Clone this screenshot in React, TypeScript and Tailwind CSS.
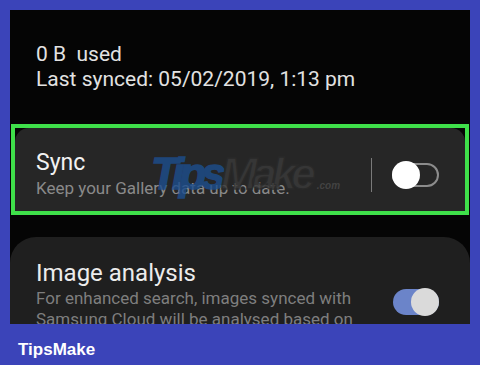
export default function App() {
  return (
    <div
      className="flex h-[365px] w-[480px] flex-col overflow-hidden bg-[#3b44b9]"
      style={{ fontFamily: 'Roboto, "Noto Sans", sans-serif' }}
    >
      {/* Phone screen */}
      <div className="mx-[10px] mt-[10px] flex h-[314px] flex-col overflow-hidden bg-[#050505]">
        {/* Storage info */}
        <div className="pl-[26px] pt-[32px] text-[21px] leading-[25px] text-[#e2e2e2]">
          <p>0 B&nbsp; used</p>
          <p>Last synced: 05/02/2019, 1:13 pm</p>
        </div>

        {/* Sync row, highlighted */}
        <div className="mx-[1px] mt-[32px] border-4 border-[#3fe04a]">
          <div className="relative flex h-[83px] items-start rounded-t-[14px] bg-[#262626] pl-[21px] pr-[26px] pt-[21px]">
            <div className="flex-1">
              <p className="text-[23px] leading-[28px] text-[#f2f2f2]">Sync</p>
              <p className="text-[17px] leading-[22px] text-[#8a8a8a]">Keep your Gallery data up to date.</p>
            </div>
            <div className="mt-[9px] flex items-center">
              <div className="h-[34px] w-[1px] bg-[#7a7a7a]" />
              <div className="relative ml-[20px] h-[24px] w-[47px] rounded-full border-2 border-[#8c8c8c]">
                <div className="absolute left-[-2px] top-[-4px] h-[28px] w-[28px] rounded-full bg-white" />
              </div>
            </div>

            {/* Watermark */}
            <div
              className="pointer-events-none absolute left-[136px] top-[24px] flex items-baseline text-[44px] font-black italic leading-[44px] tracking-[-5px] opacity-80"
              style={{ fontFamily: '"Liberation Sans", Arial, sans-serif' }}
            >
              <span className="text-[#1d4e8e] [-webkit-text-stroke:1.5px_#1d4e8e]">Tips</span>
              <span className="text-[#3a3a3a] [-webkit-text-stroke:1.5px_#2a2a2a]">Make</span>
              <span className="ml-[6px] text-[10px] tracking-normal text-[#4a4a4a]">.com</span>
            </div>
          </div>
        </div>

        {/* Image analysis card */}
        <div className="mt-[22px] flex flex-1 items-start rounded-t-[26px] bg-[#1f1f1f] pl-[26px] pr-[31px] pt-[21px]">
          <div className="flex-1">
            <p className="text-[24px] leading-[30px] text-[#ececec]">Image analysis</p>
            <p className="text-[17px] leading-[21px] text-[#7e7e7e]">
              For enhanced search, images synced with
              <br />
              Samsung Cloud will be analysed based on
            </p>
          </div>
          <div className="relative mt-[31px] h-[26px] w-[46px] rounded-full bg-[#6b84c9]">
            <div className="absolute right-0 top-[-1px] h-[28px] w-[28px] rounded-full bg-[#dadada]" />
          </div>
        </div>
      </div>

      {/* Brand bar */}
      <div className="flex-1 pl-[18px] pt-[14px]">
        <span
          className="text-[17px] font-bold leading-[20px] text-white"
          style={{ fontFamily: '"Liberation Sans", Arial, sans-serif' }}
        >
          TipsMake
        </span>
      </div>
    </div>
  )
}
